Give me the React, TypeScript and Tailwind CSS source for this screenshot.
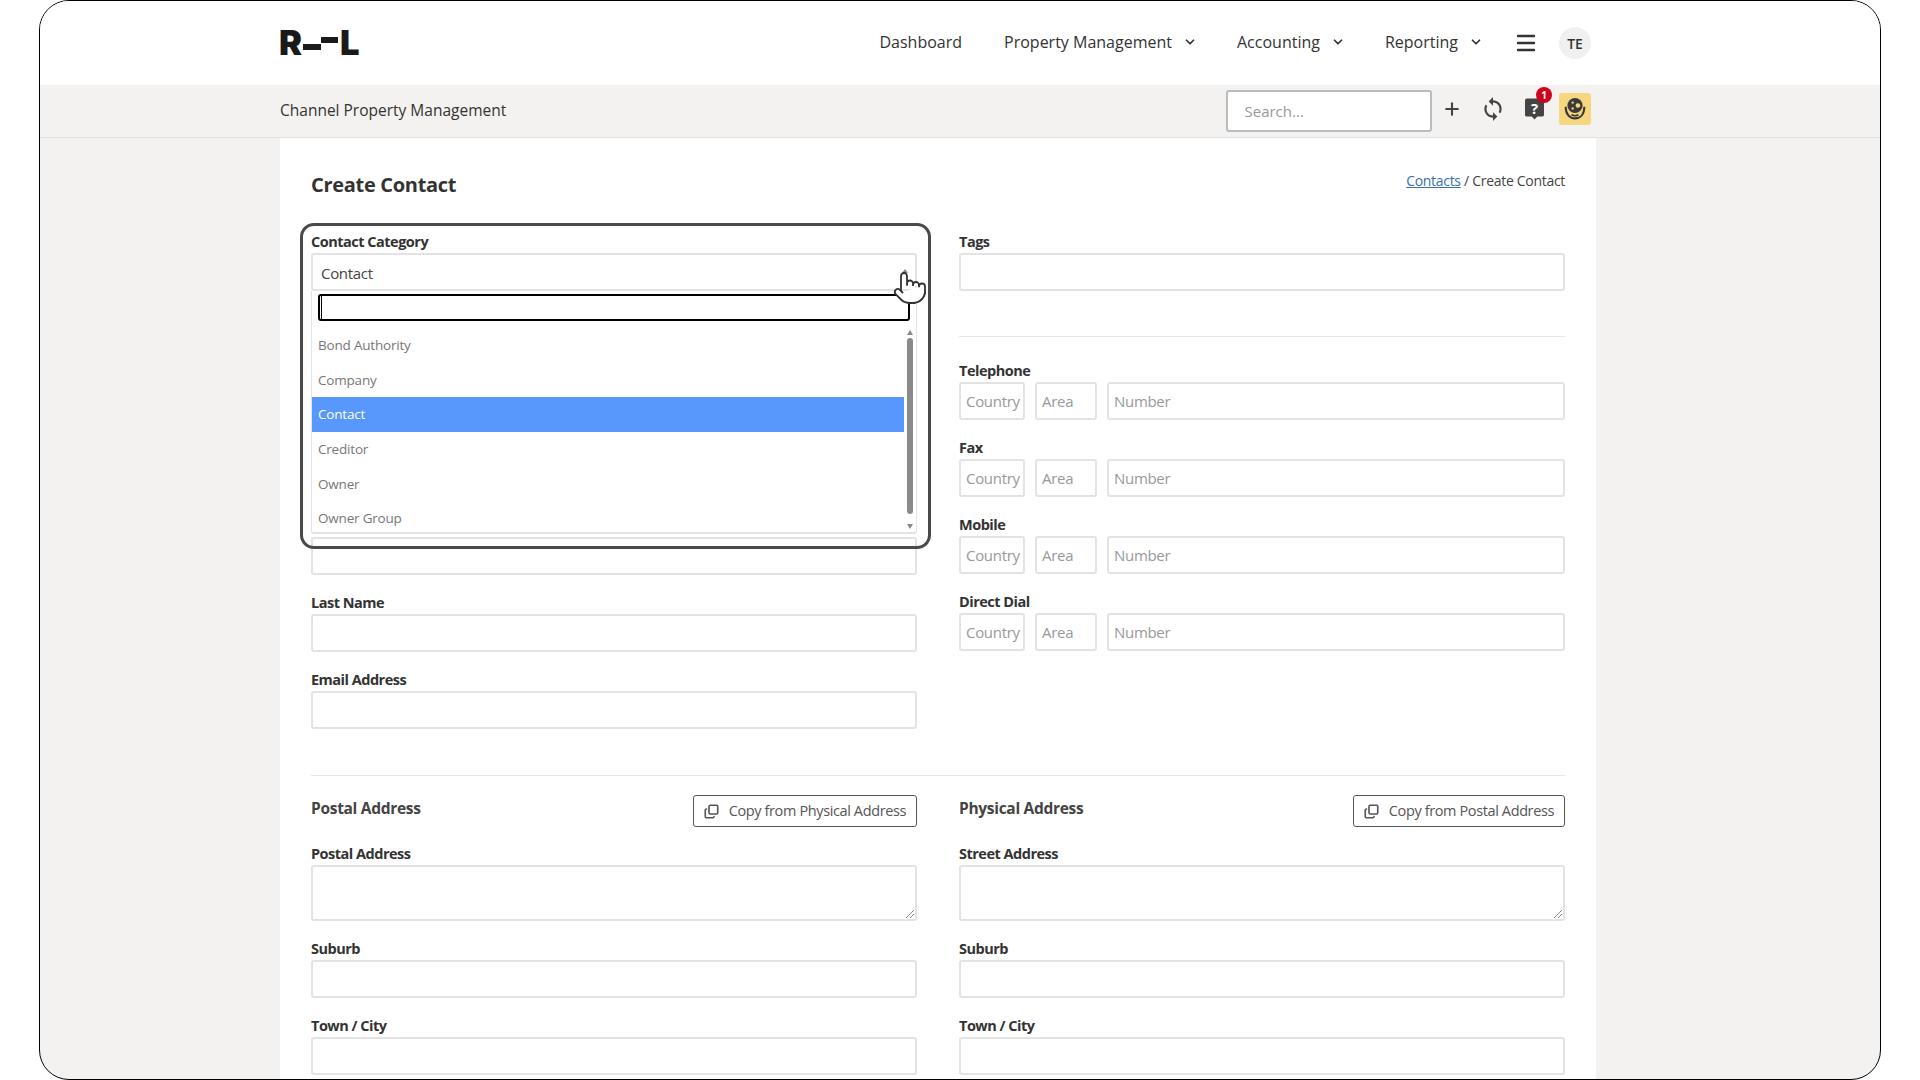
import { ChevronDown, Copy, Menu, Plus, Pointer } from "lucide-react";
import { MdSync } from "react-icons/md";

const font = "font-['Open_Sans','Noto_Sans',sans-serif]";
const labelCls = "flex h-[23px] items-center text-[14.5px] font-bold tracking-[-0.5px] text-[#333]";

function Field({ label, tall }: { label: string; tall?: boolean }) {
  return (
    <div className="mb-[16px]">
      <div className={labelCls}>{label}</div>
      <div
        className={
          "relative rounded-[3px] border-2 border-[#e3e3e3] bg-white " + (tall ? "h-[56px]" : "h-[38px]")
        }
      >
        {tall && (
          <svg viewBox="0 0 10 10" className="absolute right-0 bottom-0 h-[10px] w-[10px] text-[#888]">
            <path d="M1 9 L9 1 M5 9 L9 5" stroke="currentColor" strokeWidth="1" fill="none" />
          </svg>
        )}
      </div>
    </div>
  );
}

function PhoneField({ label }: { label: string }) {
  const box = "flex h-[38px] items-center rounded-[3px] border-2 border-[#e3e3e3] bg-white px-[5px] text-[15px] tracking-[-0.3px] text-[#999]";
  return (
    <div className="mb-[16px]">
      <div className={labelCls}>{label}</div>
      <div className="flex gap-[10px]">
        <div className={box + " w-[66px]"}>Country</div>
        <div className={box + " w-[62px]"}>Area</div>
        <div className={box + " flex-1"}>Number</div>
      </div>
    </div>
  );
}

function CopyButton({ text }: { text: string }) {
  return (
    <button className="flex h-[32px] items-center gap-[10px] rounded-[3px] border border-[#555] bg-white px-[10px] text-[14.5px] tracking-[-0.38px] text-[#555]">
      <Copy className="h-[15px] w-[15px] -scale-y-100 text-[#555]" strokeWidth={2.6} />
      {text}
    </button>
  );
}

function NavItem({ text, chevron }: { text: string; chevron?: boolean }) {
  return (
    <div className="flex items-center gap-[11px] text-[16px] font-medium text-[#333]">
      {text}
      {chevron && <ChevronDown className="h-[14px] w-[14px]" strokeWidth={3} />}
    </div>
  );
}

const options = ["Bond Authority", "Company", "Contact", "Creditor", "Owner", "Owner Group"];

export default function App() {
  return (
    <div className={"h-[1080px] w-[1920px] overflow-hidden bg-white " + font}>
      <div className="ml-[39px] h-[1080px] w-[1842px] overflow-hidden rounded-[30px] border border-black bg-[#f3f2f0]">
        {/* top nav */}
        <header className="flex h-[84px] items-center bg-white pr-[289px] pl-[240px]">
          <div className="flex items-center font-['Inter',sans-serif] text-[34.5px] leading-none font-black text-[#1a1a1a]">
            <span className="-ml-[1px]">R</span>
            <span className="mt-[7px] ml-[1px] h-[6px] w-[18px] bg-[#1a1a1a]" />
            <span className="mt-[-7px] h-[6px] w-[17px] bg-[#1a1a1a]" />
            <span className="ml-[2px]">L</span>
          </div>
          <div className="ml-auto flex items-center">
            <div className="flex items-center pb-[2px]">
              <NavItem text="Dashboard" />
              <div className="ml-[42px]"><NavItem text="Property Management" chevron /></div>
              <div className="ml-[40px]"><NavItem text="Accounting" chevron /></div>
              <div className="ml-[40px]"><NavItem text="Reporting" chevron /></div>
            </div>
            <Menu className="ml-[31px] h-[24px] w-[24px] text-[#333]" strokeWidth={2.4} />
            <div className="ml-[21px] flex h-[32px] w-[32px] items-center justify-center rounded-full bg-[#f0f0f0] text-[14px] font-semibold text-[#333]">
              TE
            </div>
          </div>
        </header>

        {/* sub bar */}
        <div className="flex h-[53px] items-center border-b border-[#e4e3e1] pr-[289px] pl-[240px]">
          <div className="text-[15.5px] text-[#333]">Channel Property Management</div>
          <div className="ml-auto flex items-center">
            <div className="flex h-[42px] w-[206px] items-center rounded-[3px] border-2 border-[#bbb] bg-white pl-[17px] text-[15px] text-[#999]">
              Search...
            </div>
            <div className="mb-[4px] flex items-center">
              <Plus className="ml-[10px] h-[20px] w-[20px] text-[#444]" strokeWidth={2.5} />
              <MdSync className="ml-[18.5px] h-[26px] w-[26px] text-[#444]" />
              <div className="relative ml-[19px] h-[24px] w-[19px]">
                <svg viewBox="0 0 20 24" className="h-[24px] w-[19px]">
                  <path d="M2 1h16a2 2 0 0 1 2 2v15a2 2 0 0 1-2 2h-5l-3 3-3-3H2a2 2 0 0 1-2-2V3a2 2 0 0 1 2-2z" fill="#444" />
                </svg>
                <span className="absolute inset-x-0 top-0 text-center text-[15px] font-bold text-white">?</span>
                <span className="absolute top-[-10px] right-[-8px] flex h-[16px] w-[16px] items-center justify-center rounded-full bg-[#d0021b] text-[10px] font-bold text-white">
                  1
                </span>
              </div>
              <div className="ml-[15px] flex h-[32px] w-[32px] items-center justify-center rounded-[3px] bg-[#f6d77f]">
                <svg viewBox="0 0 24 24" className="h-[28px] w-[28px]">
                  <circle cx="12" cy="9" r="6.5" fill="#3a3a3a" />
                  <circle cx="14.5" cy="9" r="2" fill="#f6d77f" />
                  <circle cx="10" cy="6.5" r="1" fill="#f6d77f" />
                  <circle cx="10" cy="11.5" r="1" fill="#f6d77f" />
                  <path d="M4 10c0 6 3 10 8 10s8-4 8-10" fill="none" stroke="#3a3a3a" strokeWidth="1.8" />
                  <path d="M9 17c2 1 4 1 6 0" fill="none" stroke="#3a3a3a" strokeWidth="1.4" />
                </svg>
              </div>
            </div>
          </div>
        </div>

        {/* content panel */}
        <main className="relative ml-[240px] w-[1316px] bg-white px-[31px] pt-[32px]">
          <div className="mb-[24px] flex h-[36px] items-start justify-between">
            <h1 className="text-[20px] font-bold tracking-[-0.3px] text-[#333]">Create Contact</h1>
            <div className="text-[14px] tracking-[-0.3px] text-[#444]">
              <span className="text-[#3a6fb0] underline">Contacts</span> / Create Contact
            </div>
          </div>

          <div className="grid grid-cols-2 gap-x-[42px]">
            {/* left col */}
            <div>
              <div className="relative">
                <Field label="Contact Category" />
                <div className="h-[207px]" />
                <Field label="" />
                <Field label="Last Name" />
                <Field label="Email Address" />
                {/* highlight + open dropdown */}
                <div className="absolute top-[-7px] left-[-11px] h-[326px] w-[631px] rounded-[14px] border-[3px] border-[#4a4a4a]" />
                <div className="absolute top-[31px] left-0 flex h-[24px] w-full items-center pl-[10px] text-[15px] tracking-[-0.3px] text-[#444]">
                  Contact
                </div>
                <div className="absolute top-[61px] left-0 h-[243px] w-full rounded-b-[3px] border-x border-b-2 border-[#e3e3e3] bg-white">
                  <div className="mx-[6px] mt-[3px] h-[27px] rounded-[3px] border-2 border-black pl-[1px]">
                    <div className="h-full w-px bg-black" />
                  </div>
                  <div className="mt-[7px] flex">
                    <div className="flex-1">
                      {options.map((o) => (
                        <div
                          key={o}
                          className={
                            "flex h-[34.6px] items-center pl-[6px] text-[13.5px] tracking-[-0.2px] " +
                            (o === "Contact" ? "bg-[#5897fb] text-white" : "text-[#777]")
                          }
                        >
                          {o}
                        </div>
                      ))}
                    </div>
                    <div className="relative h-[206px] w-[12px]">
                      <div className="absolute top-[2px] left-[3px] border-x-[3px] border-b-[5px] border-x-transparent border-b-[#888]" />
                      <div className="absolute top-[10px] left-[3px] h-[176px] w-[6px] rounded-[3px] bg-[#8a8a8a]" />
                      <div className="absolute top-[196px] left-[3px] border-x-[3px] border-t-[5px] border-x-transparent border-t-[#888]" />
                    </div>
                  </div>
                </div>
                <div className="absolute top-[39px] left-[591px] border-x-[3px] border-b-[4px] border-x-transparent border-b-[#888]" />
                <Pointer className="absolute top-[40px] left-[581px] h-[36px] w-[36px] fill-white text-[#333]" strokeWidth={1.2} />
              </div>
            </div>

            {/* right col */}
            <div>
              <Field label="Tags" />
              <div className="mt-[45px] mb-[22px] h-px bg-[#e8e8e8]" />
              <PhoneField label="Telephone" />
              <PhoneField label="Fax" />
              <PhoneField label="Mobile" />
              <PhoneField label="Direct Dial" />
            </div>
          </div>

          <div className="mt-[30px] h-px bg-[#e8e8e8]" />

          <div className="mt-[19px] grid grid-cols-2 gap-x-[42px]">
            {[
              { title: "Postal Address", btn: "Copy from Physical Address", first: "Postal Address" },
              { title: "Physical Address", btn: "Copy from Postal Address", first: "Street Address" },
            ].map((c) => (
              <div key={c.title}>
                <div className="mb-[15px] flex items-start justify-between">
                  <div className="pt-[2px] text-[15.5px] font-bold tracking-[-0.3px] text-[#444]">{c.title}</div>
                  <CopyButton text={c.btn} />
                </div>
                <Field label={c.first} tall />
                <Field label="Suburb" />
                <Field label="Town / City" />
              </div>
            ))}
          </div>
        </main>
      </div>
    </div>
  );
}
